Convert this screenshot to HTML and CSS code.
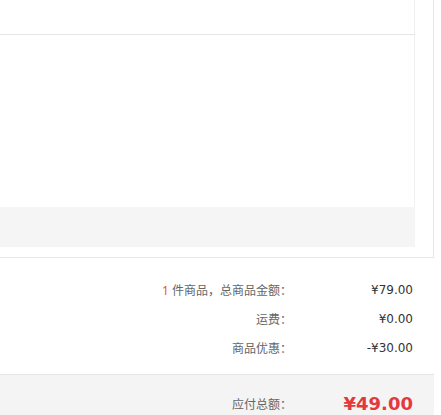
FILE: index.html
```html
<!doctype html>
<html>
    <head>
        <meta charset="utf-8">
        <link rel="stylesheet" href="styles.css">
    </head>
    <body>
        <div class="page">
            <div class="order-box">
                <div class="goods">
                    <div class="goods-head"></div>
                    <div class="goods-body"></div>
                    <div class="goods-foot"></div>
                </div>
            </div>

            <div class="summary">
                <div class="row">
                    <span class="label"><em class="count">1</em> 件商品，总商品金额：</span>
                    <span class="value">¥79.00</span>
                </div>
                <div class="row">
                    <span class="label">运费：</span>
                    <span class="value">¥0.00</span>
                </div>
                <div class="row">
                    <span class="label">商品优惠：</span>
                    <span class="value">-¥30.00</span>
                </div>
            </div>

            <div class="total">
                <div class="row">
                    <span class="label">应付总额：</span>
                    <span class="value price">¥49.00</span>
                </div>
            </div>
        </div>
    </body>
</html>
```

FILE: styles.css
```css
* {
    margin: 0;
    padding: 0;
    box-sizing: border-box;
}
body {
    background: #fff;
    font-family: "Noto Sans", "Noto Sans CJK SC", sans-serif;
    font-size: 12px;
    color: #666;
}
.page {
    width: 434px;
}
.order-box {
    border-right: 1px solid #e6e6e6;
    border-bottom: 1px solid #e6e6e6;
    padding: 0 18px 10px 0;
}
.goods-head {
    height: 35px;
    border-bottom: 1px solid #e6e6e6;
    border-right: 1px solid #f0f0f0;
}
.goods-body {
    height: 172px;
    border-right: 1px solid #f0f0f0;
}
.goods-foot {
    height: 40px;
    background: #f5f5f5;
}
.summary {
    padding: 17px 0 12px;
}
.row {
    display: flex;
    justify-content: flex-end;
    align-items: center;
    height: 29px;
    padding-right: 21px;
}
.label {
    text-align: right;
}
.count {
    font-style: normal;
    color: #f3502a;
}
.value {
    width: 121px;
    text-align: right;
    color: #333;
    font-family: "DejaVu Sans", sans-serif;
    font-size: 12px;
}
.total {
    border-top: 1px solid #e6e6e6;
    background: #f4f4f4;
    padding-top: 14px;
    height: 60px;
}
.total .price {
    color: #e4393c;
    font-size: 18px;
    font-weight: bold;
}
```
